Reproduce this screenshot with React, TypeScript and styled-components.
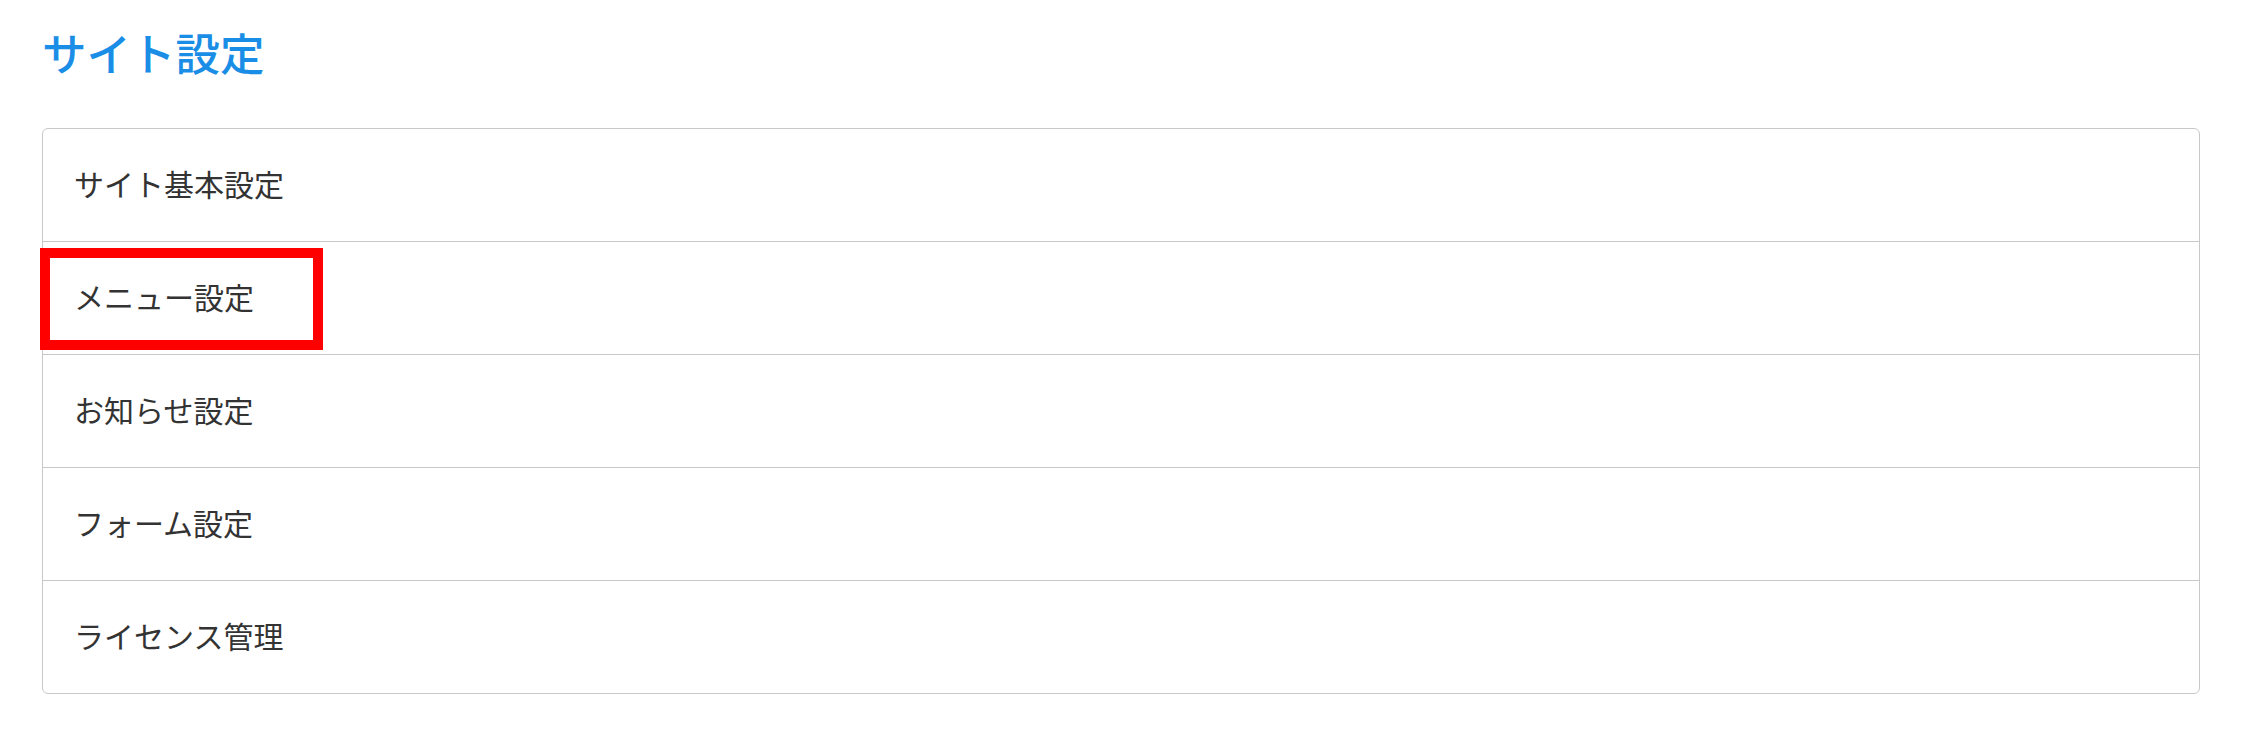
import React from 'react';
import styled, { createGlobalStyle } from 'styled-components';

const GlobalStyle = createGlobalStyle`
  html, body {
    margin: 0;
    padding: 0;
    background: #ffffff;
  }
  body {
    font-family: "Noto Sans CJK JP", "Noto Sans", sans-serif;
  }
`;

const Page = styled.div`
  padding: 0 42px;
`;

const Title = styled.h1`
  margin: 25px 0 50px;
  font-size: 44.5px;
  line-height: 53px;
  font-weight: 500;
  color: #1a8ee6;
`;

const SettingsList = styled.ul`
  list-style: none;
  margin: 0;
  padding: 0;
  border: 1px solid #c8c8c8;
  border-radius: 6px;
`;

const SettingsItem = styled.li`
  position: relative;
  display: flex;
  align-items: center;
  height: 113px;
  padding: 0 31px 4px;
  box-sizing: border-box;
  font-size: 30px;
  color: #333333;
  border-bottom: 1px solid #c8c8c8;

  &:last-child {
    height: 112px;
    border-bottom: none;
  }
`;

// 注釈の赤枠（スクリーンショット上の強調）
const Highlight = styled.span`
  position: absolute;
  left: -3px;
  top: 6px;
  width: 283px;
  height: 102px;
  box-sizing: border-box;
  border: 10px solid #ff0000;
  pointer-events: none;
`;

const items = [
  { label: 'サイト基本設定' },
  { label: 'メニュー設定', highlighted: true },
  { label: 'お知らせ設定' },
  { label: 'フォーム設定' },
  { label: 'ライセンス管理' },
];

const App: React.FC = () => {
  return (
    <>
      <GlobalStyle />
      <Page>
        <Title>サイト設定</Title>
        <SettingsList>
          {items.map(item => (
            <SettingsItem key={item.label}>
              {item.label}
              {item.highlighted && <Highlight />}
            </SettingsItem>
          ))}
        </SettingsList>
      </Page>
    </>
  );
};

export default App;
